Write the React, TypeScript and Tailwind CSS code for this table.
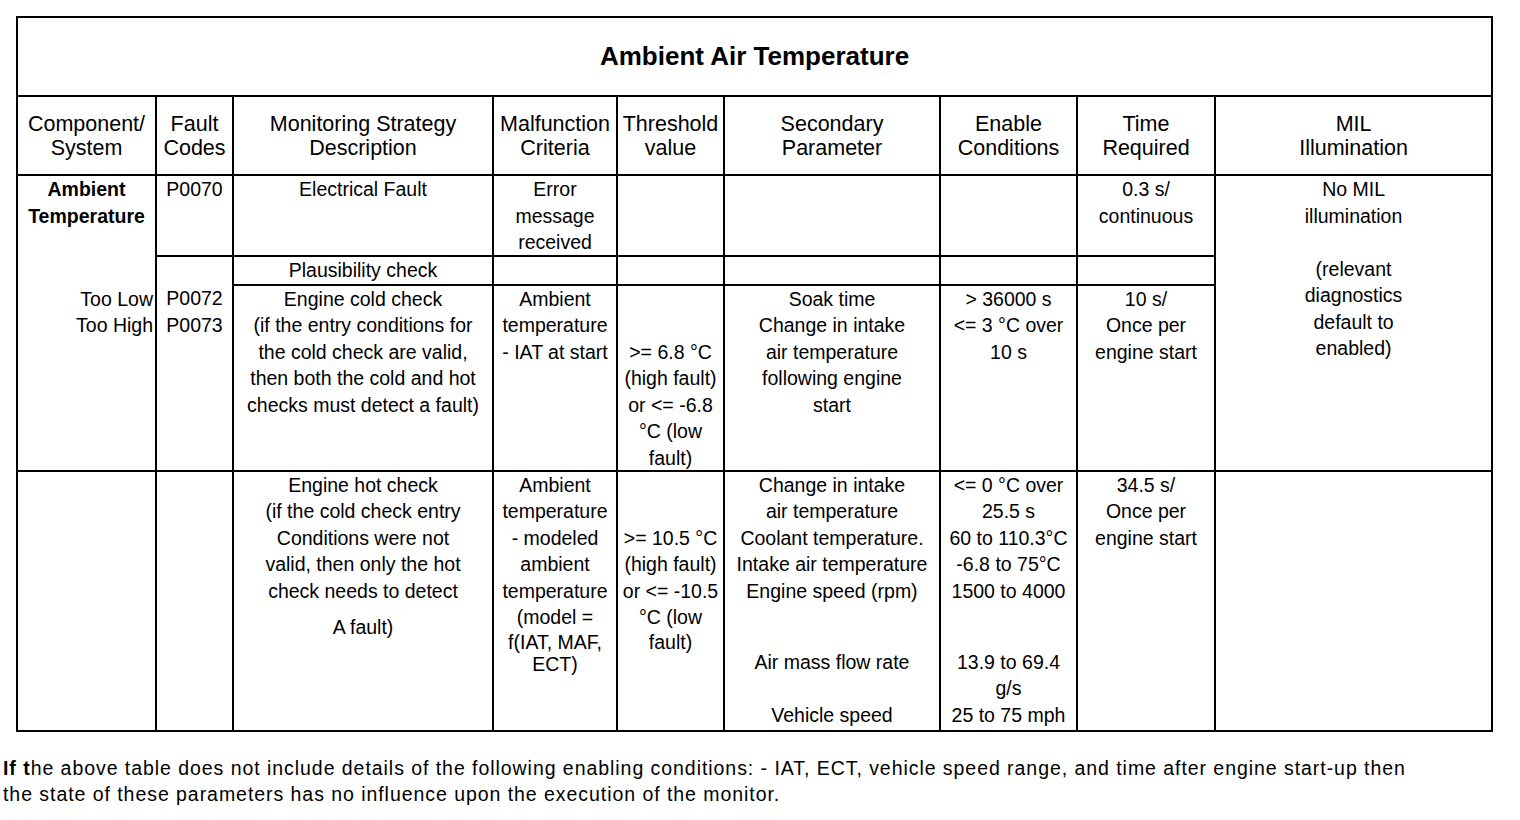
import React from "react";

const line = "whitespace-nowrap h-[26.5px] leading-[26.5px]";
const tight = "whitespace-nowrap h-[22.5px] leading-[22.5px]";
const cell = "border-2 border-black align-top p-0 text-center";
const head = "border-2 border-black align-middle p-0 text-center font-normal text-[21.5px] leading-[24px]";

function Lines({ items }: { items: string[] }) {
  return (
    <>
      {items.map((t, i) => (
        <div key={i} className={line}>
          {t === "" ? "\u00a0" : t}
        </div>
      ))}
    </>
  );
}

export default function App() {
  return (
    <div className="w-[1520px] h-[820px] bg-white text-black font-['Liberation_Sans',Arial,sans-serif]">
      <div className="pl-[16px] pt-[16px]">
        <table className="border-collapse table-fixed w-[1477px] text-[19.5px]">
          <colgroup>
            <col className="w-[139px]" />
            <col className="w-[77px]" />
            <col className="w-[260px]" />
            <col className="w-[124px]" />
            <col className="w-[107px]" />
            <col className="w-[216px]" />
            <col className="w-[137px]" />
            <col className="w-[138px]" />
            <col className="w-[277px]" />
          </colgroup>
          <tbody>
            <tr className="h-[79px]">
              <td colSpan={9} className="border-2 border-black text-center align-middle text-[26px] font-bold">
                Ambient Air Temperature
              </td>
            </tr>
            <tr className="h-[79px]">
              <th className={head}>Component/<br />System</th>
              <th className={head}>Fault<br />Codes</th>
              <th className={head}>Monitoring Strategy<br />Description</th>
              <th className={head}>Malfunction<br />Criteria</th>
              <th className={head}>Threshold<br />value</th>
              <th className={head}>Secondary<br />Parameter</th>
              <th className={head}>Enable<br />Conditions</th>
              <th className={head}>Time<br />Required</th>
              <th className={head}>MIL<br />Illumination</th>
            </tr>

            {/* row 1: electrical fault */}
            <tr className="h-[81px]">
              <td rowSpan={3} className={cell}>
                <div className={line + " font-bold"}>Ambient</div>
                <div className={line + " font-bold"}>Temperature</div>
                <div className="h-[56.5px]" />
                <div className={line + " text-right pr-[2px]"}>Too Low</div>
                <div className={line + " text-right pr-[2px]"}>Too High</div>
              </td>
              <td className={cell}><Lines items={["P0070"]} /></td>
              <td className={cell}><Lines items={["Electrical Fault"]} /></td>
              <td className={cell}>
                <Lines items={["Error", "message"]} />
                <div className="whitespace-nowrap h-[24px] leading-[26.5px]">received</div>
              </td>
              <td className={cell}></td>
              <td className={cell}></td>
              <td className={cell}></td>
              <td className={cell}><Lines items={["0.3 s/", "continuous"]} /></td>
              <td rowSpan={3} className={cell}>
                <Lines items={["No MIL", "illumination", "", "(relevant", "diagnostics", "default to", "enabled)"]} />
              </td>
            </tr>

            {/* row 2: plausibility */}
            <tr className="h-[28px]">
              <td rowSpan={2} className={cell}>
                <div className="h-[28px]" />
                <Lines items={["P0072", "P0073"]} />
              </td>
              <td className={cell}><Lines items={["Plausibility check"]} /></td>
              <td className={cell}></td>
              <td className={cell}></td>
              <td className={cell}></td>
              <td className={cell}></td>
              <td className={cell}></td>
            </tr>

            {/* row 3: cold check */}
            <tr className="h-[186px]">
              <td className={cell}>
                <Lines
                  items={[
                    "Engine cold check",
                    "(if the entry conditions for",
                    "the cold check are valid,",
                    "then both the cold and hot",
                    "checks must detect a fault)",
                  ]}
                />
              </td>
              <td className={cell}><Lines items={["Ambient", "temperature", "- IAT at start"]} /></td>
              <td className={cell}>
                <Lines items={["", "", ">= 6.8 °C", "(high fault)", "or <= -6.8", "°C (low"]} />
                <div className="whitespace-nowrap h-[22px] leading-[26.5px]">fault)</div>
              </td>
              <td className={cell}>
                <Lines items={["Soak time", "Change in intake", "air temperature", "following engine", "start"]} />
              </td>
              <td className={cell}><Lines items={["> 36000 s", "<= 3 °C over", "10 s"]} /></td>
              <td className={cell}><Lines items={["10 s/", "Once per", "engine start"]} /></td>
            </tr>

            {/* row 4: hot check */}
            <tr className="h-[260px]">
              <td className={cell}></td>
              <td className={cell}></td>
              <td className={cell}>
                <Lines
                  items={[
                    "Engine hot check",
                    "(if the cold check entry",
                    "Conditions were not",
                    "valid, then only the hot",
                    "check needs to detect",
                  ]}
                />
                <div className="h-[9.5px]" />
                <div className={line}>A fault)</div>
              </td>
              <td className={cell}>
                <Lines items={["Ambient", "temperature", "- modeled", "ambient", "temperature", "(model ="]} />
                <div className={tight}>f(IAT, MAF,</div>
                <div className={tight}>ECT)</div>
              </td>
              <td className={cell}>
                <Lines items={["", "", ">= 10.5 °C", "(high fault)", "or <= -10.5"]} />
                <div className={line}>°C (low</div>
                <div className={tight}>fault)</div>
              </td>
              <td className={cell}>
                <Lines
                  items={[
                    "Change in intake",
                    "air temperature",
                    "Coolant temperature.",
                    "Intake air temperature",
                    "Engine speed (rpm)",
                  ]}
                />
                <div className="h-[44.5px]" />
                <Lines items={["Air mass flow rate", ""]} />
                <div className="whitespace-nowrap h-[24px] leading-[26.5px]">Vehicle speed</div>
              </td>
              <td className={cell}>
                <Lines items={["<= 0 °C over", "25.5 s", "60 to 110.3°C", "-6.8 to 75°C", "1500 to 4000"]} />
                <div className="h-[44.5px]" />
                <Lines items={["13.9 to 69.4", "g/s"]} />
                <div className="whitespace-nowrap h-[24px] leading-[26.5px]">25 to 75 mph</div>
              </td>
              <td className={cell}><Lines items={["34.5 s/", "Once per", "engine start"]} /></td>
              <td className={cell}></td>
            </tr>
          </tbody>
        </table>
      </div>

      <div className="pl-[3px] pt-[23px] text-[19.5px] leading-[26px] tracking-[0.95px] whitespace-nowrap">
        <div>
          <b>If t</b>he above table does not include details of the following enabling conditions: - IAT, ECT, vehicle speed range, and time after engine start-up then
        </div>
        <div>the state of these parameters has no influence upon the execution of the monitor.</div>
      </div>
    </div>
  );
}
